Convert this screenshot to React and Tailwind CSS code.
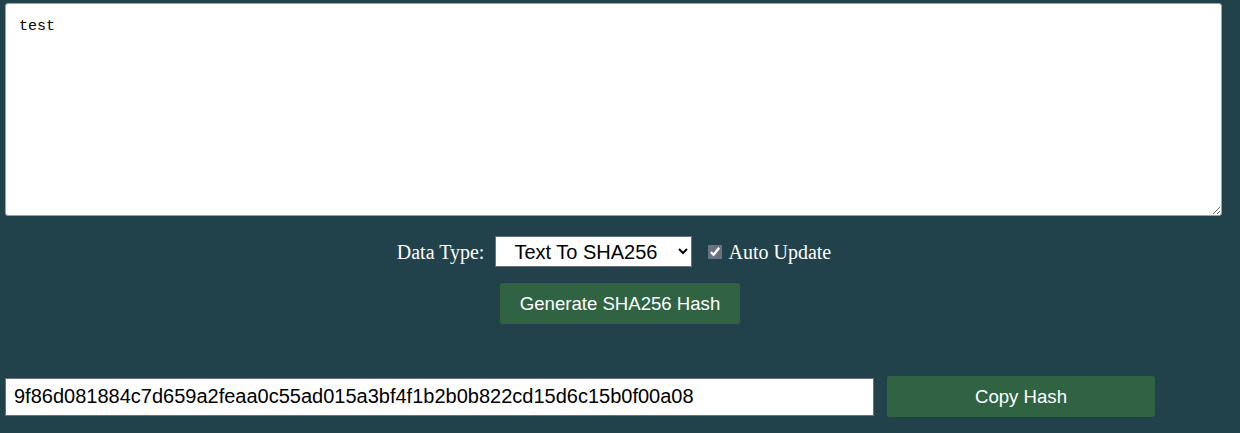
import React, { useState } from "react";

const App = () => {
  const [text, setText] = useState("test");
  const [autoUpdate, setAutoUpdate] = useState(true);
  const hash = "9f86d081884c7d659a2feaa0c55ad015a3bf4f1b2b0b822cd15d6c15b0f00a08";

  return (
    <div className="min-h-[433px] bg-[#21414b] pt-[3px] font-['Liberation_Serif',serif]">
      {/* Input area */}
      <div className="pl-[5px] pr-[18px]">
        <textarea
          value={text}
          onChange={(e) => setText(e.target.value)}
          className="block w-full h-[213px] bg-white rounded-[3px] border border-gray-400 px-[13px] py-[13px] text-[15px] leading-[20px] text-black font-['Liberation_Mono',monospace] outline-none"
        />
      </div>

      {/* Options */}
      <div className="flex items-center justify-center mt-[20px] pr-[12px] h-[31px] text-white text-[20px]">
        <span className="mr-[11px]">Data Type:</span>
        <select className="w-[197px] h-[31px] bg-white text-black border border-gray-500 text-[20px] font-['Liberation_Sans',sans-serif] pl-[14px] outline-none">
          <option>Text To SHA256</option>
        </select>
        <label className="flex items-center ml-[16px]">
          <input
            type="checkbox"
            checked={autoUpdate}
            onChange={(e) => setAutoUpdate(e.target.checked)}
            className="w-[14px] h-[14px] mr-[6px] accent-gray-500"
          />
          Auto Update
        </label>
      </div>

      <div className="flex justify-center mt-[16px]">
        <button className="w-[240px] h-[41px] bg-[#2f6342] text-white rounded-[3px] text-[18.6px] font-['Liberation_Sans',sans-serif]">
          Generate SHA256 Hash
        </button>
      </div>

      {/* Output */}
      <div className="flex items-center mt-[52px] pl-[5px]">
        <input
          readOnly
          value={hash}
          className="w-[869px] h-[38px] bg-white border border-gray-500 px-[8px] text-[20px] text-black font-['Liberation_Sans',sans-serif] outline-none"
        />
        <button className="ml-[13px] w-[268px] h-[41px] bg-[#2f6342] text-white rounded-[3px] text-[18.6px] font-['Liberation_Sans',sans-serif]">
          Copy Hash
        </button>
      </div>
    </div>
  );
};

export default App;
